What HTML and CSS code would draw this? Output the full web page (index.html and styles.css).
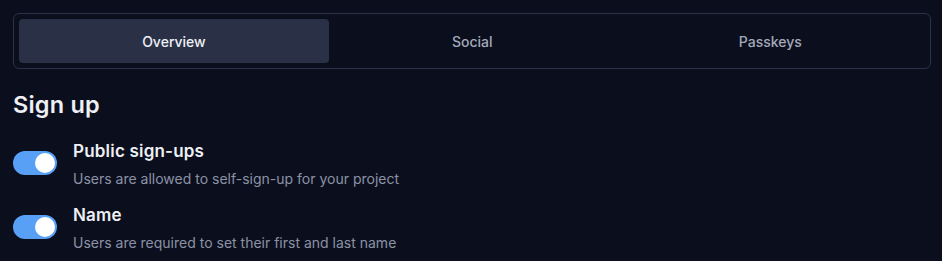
FILE: index.html
```html
<!DOCTYPE html>
<html lang="en">
<head>
    <meta charset="UTF-8">
    <meta name="viewport" content="width=device-width, initial-scale=1.0">
    <title>Authentication</title>
    <link rel="stylesheet" href="styles.css">
</head>
<body>
    <div class="tabs">
        <button class="tab active">Overview</button>
        <button class="tab">Social</button>
        <button class="tab">Passkeys</button>
    </div>

    <h2 class="section-title">Sign up</h2>

    <div class="setting">
        <span class="toggle on"><span class="knob"></span></span>
        <div class="setting-text">
            <div class="setting-name">Public sign-ups</div>
            <div class="setting-desc">Users are allowed to self-sign-up for your project</div>
        </div>
    </div>

    <div class="setting">
        <span class="toggle on"><span class="knob"></span></span>
        <div class="setting-text">
            <div class="setting-name">Name</div>
            <div class="setting-desc">Users are required to set their first and last name</div>
        </div>
    </div>
</body>
</html>
```

FILE: styles.css
```css
body {
    margin: 0;
    padding: 13px 11px 13px 13px;
    background: #0b0f1d;
    color: #eef0f5;
    font-family: 'Inter', 'Noto Sans', sans-serif;
}
.tabs {
    display: flex;
    padding: 5px;
    border: 1px solid #2b3146;
    border-radius: 6px;
}
.tab {
    flex: 1 1 auto;
    height: 44px;
    border: none;
    border-radius: 4px;
    background: transparent;
    color: #a3a9ba;
    font-family: inherit;
    font-size: 14px;
    font-weight: 500;
}
.tab.active {
    background: #2a3046;
    color: #eef0f5;
}
.section-title {
    margin: 22px 0 0;
    font-size: 23.5px;
    line-height: 28px;
    font-weight: 600;
    letter-spacing: 0.2px;
}
.setting {
    display: flex;
    align-items: flex-start;
    gap: 16px;
    margin-top: 21px;
}
.setting + .setting {
    margin-top: 15px;
}
.toggle {
    width: 44px;
    height: 24px;
    border-radius: 12px;
    background: #58a0f6;
    display: flex;
    align-items: center;
    padding: 0 2px;
    box-sizing: border-box;
    margin-top: 11px;
}
.toggle.on {
    justify-content: flex-end;
}
.knob {
    width: 20px;
    height: 20px;
    border-radius: 50%;
    background: #fff;
}
.setting-name {
    font-size: 17px;
    line-height: 22px;
    font-weight: 600;
    letter-spacing: 0.2px;
}
.setting-desc {
    margin-top: 7px;
    font-size: 14px;
    line-height: 20px;
    color: #8b92a6;
}
```
